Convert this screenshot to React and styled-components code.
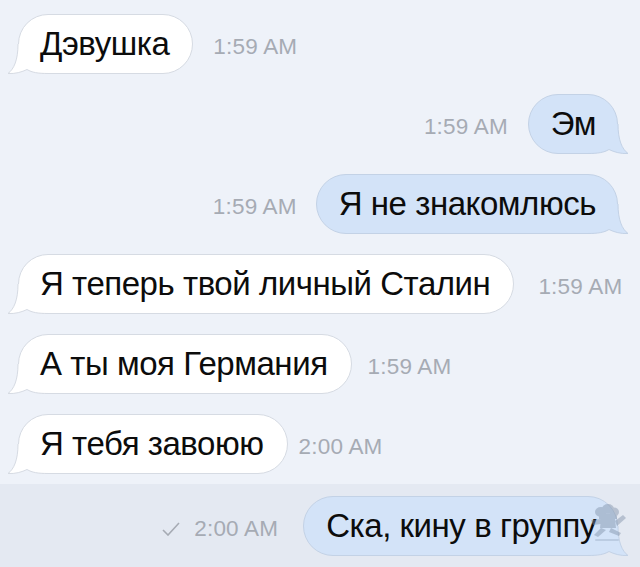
import React from "react";
import styled, { createGlobalStyle } from "styled-components";

const Global = createGlobalStyle`
  html, body { margin: 0; padding: 0; }
  body {
    width: 640px;
    height: 567px;
    overflow: hidden;
    background: #eef2f9;
    font-family: "Liberation Sans", Arial, sans-serif;
  }
`;

const Screen = styled.div`
  width: 640px;
  height: 567px;
  display: flex;
  flex-direction: column;
  background: #eef2f9;
`;

const Thread = styled.div`
  display: flex;
  flex-direction: column;
  gap: 20px;
  padding: 14px 0 0;
`;

const Row = styled.div`
  display: flex;
  align-items: center;
  flex-direction: ${(p) => (p.$mine ? "row-reverse" : "row")};
  gap: ${(p) => p.$gap || 20}px;
  padding: ${(p) => (p.$mine ? "0 22px 0 0" : "0 0 0 18px")};
`;

const LastBand = styled.div`
  margin-top: 10px;
  flex: 1;
  background: #e4e9f2;
  padding-top: 12px;
`;

const Bubble = styled.div`
  position: relative;
  height: 60px;
  box-sizing: border-box;
  display: flex;
  align-items: center;
  padding: 0 ${(p) => (p.$mine ? 21 : 23)}px 0 ${(p) => (p.$mine ? 22 : 21)}px;
  border-radius: 30px;
  background: ${(p) => (p.$mine ? "#d3e3f8" : "#ffffff")};
  border: 1px solid ${(p) => (p.$mine ? "#c3d2e6" : "#d6dbe3")};
  color: #0c0c0c;
  font-size: 33px;
  white-space: nowrap;
`;

const BubbleText = styled.span`
  position: relative;
  z-index: 1;
  letter-spacing: -0.45px;
`;

const Tail = styled.svg`
  position: absolute;
  bottom: -1px;
  ${(p) => (p.$mine ? "right: -11px; transform: scaleX(-1);" : "left: -11px;")}
  width: 40px;
  height: 30px;
  overflow: visible;
  z-index: 0;
`;

const Time = styled.span`
  display: flex;
  align-items: center;
  gap: 14px;
  margin-top: 6px;
  font-size: 22.5px;
  color: #a6abb4;
  letter-spacing: 0.2px;
  white-space: nowrap;
`;

const Mark = styled.svg`
  position: absolute;
  right: -10px;
  bottom: 12px;
  width: 38px;
  height: 40px;
  z-index: 2;
  opacity: 0.45;
`;

function BubbleTail({ mine }) {
  const fill = mine ? "#d3e3f8" : "#ffffff";
  const stroke = mine ? "#c3d2e6" : "#d6dbe3";
  const outline =
    "M10 0 C10 16 6 25 0 29.5 C7 30 14 28 19 25.5 C24 28.5 30 29.5 40 29.5";
  return (
    <Tail $mine={mine} viewBox="0 0 40 30">
      <path d={outline + " L40 0 Z"} fill={fill} />
      <path d={outline} fill="none" stroke={stroke} strokeWidth="1" />
    </Tail>
  );
}

function Check() {
  return (
    <svg width="18" height="14" viewBox="0 0 18 14">
      <path d="M1 8 L6 13 L17 1" fill="none" stroke="#a6abb4" strokeWidth="1.6" />
    </svg>
  );
}

function Watermark() {
  return (
    <Mark viewBox="0 0 38 40">
      <g fill="#7f90a8">
        <ellipse cx="12" cy="9" rx="6" ry="5" />
        <ellipse cx="19" cy="6" rx="6" ry="5" />
        <ellipse cx="25" cy="9" rx="5" ry="4.5" />
        <rect x="10" y="11" width="18" height="5" />
        <path d="M12 16 L26 16 L27 25 L11 25 Z" />
        <path d="M2 17 L12 16 L12 21 L4 22 Z" />
        <path d="M26 18 L34 12 L37 15 L28 23 Z" />
        <path d="M12 25 L5 32 L9 34 L17 27 Z" />
        <path d="M22 25 L32 30 L30 33 L20 29 Z" />
        <rect x="6" y="36" width="24" height="2" rx="1" opacity="0.6" />
      </g>
    </Mark>
  );
}

function Message({ text, time, mine, gap, check, watermark }) {
  return (
    <Row $mine={mine} $gap={gap}>
      <Bubble $mine={mine}>
        <BubbleText>{text}</BubbleText>
        <BubbleTail mine={mine} />
        {watermark && <Watermark />}
      </Bubble>
      <Time>
        {check && <Check />}
        {time}
      </Time>
    </Row>
  );
}

export default function App() {
  return (
    <Screen>
      <Global />
      <Thread>
        <Message text="Дэвушка" time="1:59 AM" />
        <Message text="Эм" time="1:59 AM" mine />
        <Message text="Я не знакомлюсь" time="1:59 AM" mine gap={19} />
        <Message text="Я теперь твой личный Сталин" time="1:59 AM" gap={24} />
        <Message text="А ты моя Германия" time="1:59 AM" gap={16} />
        <Message text="Я тебя завоюю" time="2:00 AM" gap={11} />
      </Thread>
      <LastBand>
        <Message text="Ска, кину в группу" time="2:00 AM" mine check watermark gap={25} />
      </LastBand>
    </Screen>
  );
}
